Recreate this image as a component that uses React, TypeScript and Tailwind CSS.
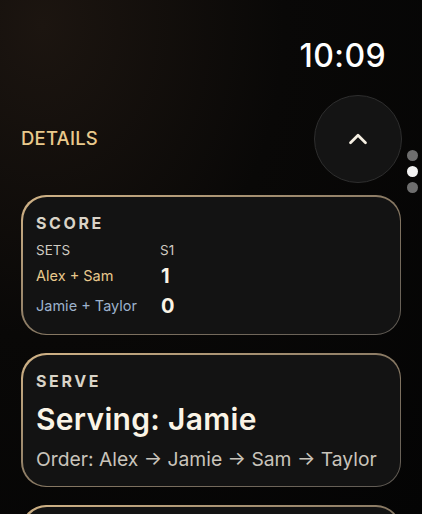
import { ChevronUp } from 'lucide-react';

function Card({ children }: { children: React.ReactNode }) {
  return (
    <div className="rounded-[25px] bg-linear-to-br from-[#d2b487] via-[#8a7a64] to-[#5f5a54] p-[1.5px]">
      <div className="rounded-[24px] bg-[#131313] px-[13.5px]">{children}</div>
    </div>
  );
}

export default function App() {
  return (
    <div
      className="relative h-[514px] w-[422px] overflow-hidden bg-[radial-gradient(ellipse_at_10%_5%,#1c1510_0%,#090807_45%,#040404_100%)] text-white"
      style={{ fontFamily: 'Inter, "Noto Sans", sans-serif' }}
    >
      {/* status bar */}
      <div className="flex justify-end pr-[36px] pt-[36px]">
        <span className="text-[32px] leading-[40px] font-medium tracking-[0.4px] text-white">10:09</span>
      </div>

      {/* header row */}
      <div className="mt-[19px] flex items-center justify-between pl-[21px] pr-[20px]">
        <span className="text-[18.5px] font-medium tracking-[0.2px] text-[#e9c98c]">DETAILS</span>
        <button className="flex h-[88px] w-[88px] items-center justify-center rounded-full border border-[#2e2e2e] bg-[#141414]">
          <ChevronUp className="h-[30px] w-[30px] text-[#f5efe2]" strokeWidth={2.2} />
        </button>
      </div>

      {/* page dots */}
      <div className="absolute right-[4px] top-[150px] flex flex-col gap-[5px]">
        <span className="h-[11px] w-[11px] rounded-full bg-[#6e6e6e]" />
        <span className="h-[11px] w-[11px] rounded-full bg-[#f2f2f2]" />
        <span className="h-[11px] w-[11px] rounded-full bg-[#6e6e6e]" />
      </div>

      <div className="mt-[12px] flex flex-col gap-[18px] px-[21px]">
        <Card>
          <div className="pb-[14.5px] pt-[16px]">
            <div className="text-[16px] leading-[20px] font-bold tracking-[2.6px] text-[#d9d3c7]">SCORE</div>
            <div className="mt-[8px] grid grid-cols-[124px_1fr] items-center text-[13.5px] leading-[18px] text-[#cfcac1]">
              <span>SETS</span>
              <span>S1</span>
            </div>
            <div className="mt-[4.5px] grid grid-cols-[125px_1fr] items-center leading-[26px]">
              <span className="text-[14.5px] text-[#e9c98c]">Alex + Sam</span>
              <span className="text-[20px] font-bold text-[#faf4e6]">1</span>
            </div>
            <div className="mt-[4px] grid grid-cols-[125px_1fr] items-center leading-[26px]">
              <span className="text-[14.5px] text-[#9db2cc]">Jamie + Taylor</span>
              <span className="text-[20px] font-bold text-[#faf4e6]">0</span>
            </div>
          </div>
        </Card>

        <Card>
          <div className="pb-[14.5px] pt-[16px]">
            <div className="text-[16px] leading-[20px] font-bold tracking-[2.6px] text-[#d9d3c7]">SERVE</div>
            <div className="mt-[10.5px] text-[30px] leading-[36px] font-semibold tracking-[0.3px] text-[#faf4e6]">
              Serving: Jamie
            </div>
            <div className="mt-[10px] text-[19.3px] leading-[24px] text-[#c9c4bb]">
              Order: Alex → Jamie → Sam → Taylor
            </div>
          </div>
        </Card>

        <Card>
          <div className="h-[60px]" />
        </Card>
      </div>
    </div>
  );
}
